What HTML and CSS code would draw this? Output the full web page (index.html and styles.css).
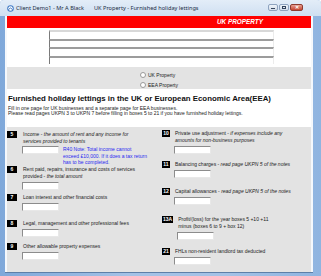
FILE: index.html
```html
<!DOCTYPE html>
<html lang="en">
<head>
    <meta charset="UTF-8">
    <title>UK Property - Furnished holiday lettings</title>
    <link rel="stylesheet" href="styles.css">
</head>
<body>

<div class="window">
    <div class="titlebar">
        <svg class="app-icon" width="7" height="7" viewBox="0 0 14 14">
            <circle cx="7" cy="7" r="6.5" fill="#3d78c4"/>
            <circle cx="7" cy="7" r="4.5" fill="#ffffff"/>
            <path d="M3 9 Q7 3 11 9" fill="none" stroke="#3d78c4" stroke-width="2"/>
        </svg>
        <span class="title">Client Demo1 - Mr A Black</span>
        <span class="title title-page">UK Property - Furnished holiday lettings</span>
        <div class="caption-buttons">
            <span class="cap-btn cap-min"><i></i></span>
            <span class="cap-btn cap-max"><i></i></span>
            <span class="cap-btn cap-close">&#x2715;</span>
        </div>
    </div>

    <div class="client">
        <div class="banner">UK PROPERTY</div>

        <!-- name and address lines -->
        <div class="name-lines">
            <div class="line first"></div>
            <div class="line"></div>
            <div class="line"></div>
            <div class="line"></div>
        </div>

        <div class="choice">
            <div class="choice-list">
                <label><span class="radio"></span>UK Property</label>
                <label><span class="radio"></span>EEA Property</label>
            </div>
        </div>

        <div class="intro">
            <h1>Furnished holiday lettings in the UK or European Economic Area(EEA)</h1>
            <p>Fill in one page for UK businesses and a separate page for EEA businesses.<br>
            Please read pages UKPN 3 to UKPN 7 before filling in boxes 5 to 21 if you have furnished holiday lettings.</p>
        </div>

        <div class="boxes">
            <div class="col col-left">
                <div class="item">
                    <span class="badge">5</span>
                    <div class="item-body">
                        <p class="label">Income - <em>the amount of rent and any income for<br>services provided to tenants</em></p>
                        <div class="field-row">
                            <input class="field" type="text">
                            <p class="note">R40 Note: Total income cannot<br>exceed &pound;10,000. If it does a tax return<br>has to be completed.</p>
                        </div>
                    </div>
                </div>
                <div class="item">
                    <span class="badge">6</span>
                    <div class="item-body">
                        <p class="label">Rent paid, repairs, insurance and costs of services<br>provided - <em>the total amount</em></p>
                        <input class="field" type="text">
                    </div>
                </div>
                <div class="item">
                    <span class="badge">7</span>
                    <div class="item-body">
                        <p class="label">Loan interest and other financial costs</p>
                        <input class="field" type="text">
                    </div>
                </div>
                <div class="item">
                    <span class="badge">8</span>
                    <div class="item-body">
                        <p class="label">Legal, management and other professional fees</p>
                        <input class="field" type="text">
                    </div>
                </div>
                <div class="item">
                    <span class="badge">9</span>
                    <div class="item-body">
                        <p class="label">Other allowable property expenses</p>
                        <input class="field" type="text">
                    </div>
                </div>
            </div>

            <div class="col col-right">
                <div class="item">
                    <span class="badge">10</span>
                    <div class="item-body">
                        <p class="label">Private use adjustment - <em>if expenses include any<br>amounts for non-business purposes</em></p>
                        <input class="field" type="text">
                    </div>
                </div>
                <div class="item">
                    <span class="badge">11</span>
                    <div class="item-body">
                        <p class="label">Balancing charges - <em>read page UKPN 5 of the notes</em></p>
                        <input class="field" type="text">
                    </div>
                </div>
                <div class="item">
                    <span class="badge">12</span>
                    <div class="item-body">
                        <p class="label">Capital allowances - <em>read page UKPN 5 of the notes</em></p>
                        <input class="field" type="text">
                    </div>
                </div>
                <div class="item">
                    <span class="badge">13A</span>
                    <div class="item-body">
                        <p class="label">Profit/(loss) for the year boxes 5 +10 +11<br>minus (boxes 6 to 9 + box 12)</p>
                        <input class="field" type="text">
                    </div>
                </div>
                <div class="item">
                    <span class="badge">21</span>
                    <div class="item-body">
                        <p class="label">FHLs non-resident landlord tax deducted</p>
                        <input class="field" type="text">
                    </div>
                </div>
            </div>
        </div>
    </div>
</div>

</body>
</html>
```

FILE: styles.css
```css
body {
    margin: 0;
    font-family: "Liberation Sans", Arial, sans-serif;
    background-color: #ffffff;
}

.window {
    width: 321px;
    height: 276px;
    box-sizing: border-box;
    padding: 0 8px 3px 5px;
    display: flex;
    flex-direction: column;
    background: linear-gradient(to right, #7fa8da, #a4c2e6 40%, #a4c2e6 70%, #8fb4e0);
    border-radius: 4px 4px 0 0;
}

/* title bar */
.titlebar {
    height: 16px;
    margin: 0 -8px 0 -5px;
    padding-left: 7px;
    display: flex;
    align-items: center;
    background: linear-gradient(#e3edf8, #cfdff1);
    border-radius: 4px 4px 0 0;
    position: relative;
}

.app-icon {
    margin-right: 2px;
}

.title {
    font-family: "Noto Sans", "DejaVu Sans", sans-serif;
    font-size: 5.6px;
    color: #1b2b44;
}

.title-page {
    margin-left: 10px;
}

.caption-buttons {
    position: absolute;
    top: 4px;
    right: 18px;
    display: flex;
    gap: 1px;
}

.cap-btn {
    width: 10px;
    height: 7px;
    border: 1px solid #8ea3bf;
    border-radius: 2px;
    background: linear-gradient(#eef3f9, #d3dde9);
    box-sizing: border-box;
    display: flex;
    justify-content: center;
    align-items: center;
}

.cap-min i {
    width: 4px;
    height: 1px;
    margin-top: 2px;
    background: #33435c;
}

.cap-max i {
    width: 4px;
    height: 3px;
    border: 1px solid #33435c;
    box-sizing: border-box;
}

.cap-close {
    width: 13px;
    background: linear-gradient(#e8a093, #c6442f);
    border-color: #8d3b30;
    color: #ffffff;
    font-size: 5px;
    font-weight: bold;
    line-height: 5px;
}

/* client area */
.client {
    flex: 1;
    display: flex;
    flex-direction: column;
    padding: 0 2px;
    background-color: #f5f8fc;
    border-bottom: 1px solid #5d7fa8;
}

.banner {
    height: 12px;
    background-color: #ff0000;
    color: #ffffff;
    font-size: 6.4px;
    font-weight: bold;
    font-style: italic;
    line-height: 12px;
    text-align: right;
    padding-right: 48px;
}

.name-lines {
    height: 39px;
    box-sizing: border-box;
    padding: 2px 0 0 42px;
    background-color: #ffffff;
}

.line {
    width: 225px;
    height: 8.5px;
    box-sizing: border-box;
    border-top: 2px solid #9c9c9c;
    border-left: 1px solid #7a7a7a;
    border-right: 1px solid #ececec;
}

.line.first {
    border-top-color: #d8d8d8;
}

.choice {
    height: 22px;
    box-sizing: border-box;
    padding-top: 3px;
    background-color: #e3e3e3;
    display: flex;
    justify-content: center;
}

.choice-list label {
    display: flex;
    align-items: center;
    height: 10px;
    font-size: 5px;
    color: #222222;
}

.radio {
    width: 4px;
    height: 4px;
    border: 1px solid #9a9a9a;
    border-radius: 50%;
    background-color: #ffffff;
    margin-right: 2px;
}

.intro {
    height: 38px;
    box-sizing: border-box;
    padding: 4px 0 0 1px;
    background-color: #ffffff;
}

.intro h1 {
    margin: 0 0 2px 0;
    font-size: 7.85px;
    line-height: 11px;
    color: #111111;
}

.intro p {
    margin: 0;
    font-size: 5px;
    line-height: 5px;
    color: #222222;
}

/* numbered boxes */
.boxes {
    flex: 1;
    display: flex;
    background-color: #e3e3e3;
}

.col {
    display: grid;
}

.col-left {
    width: 155px;
    padding-top: 4px;
    grid-template-rows: 35px 28px 26px 23px auto;
}

.col-right {
    padding-top: 3px;
    grid-template-rows: 31px 27px 28px 32px auto;
}

.item {
    display: flex;
    align-items: flex-start;
    gap: 6px;
}

.col-right .item {
    gap: 5px;
}

.badge {
    min-width: 10px;
    height: 7px;
    box-sizing: border-box;
    background-color: #000000;
    color: #ffffff;
    font-size: 5px;
    font-weight: bold;
    line-height: 7px;
    text-align: center;
}

.col-right .badge {
    min-width: 8px;
    padding: 0 1px;
}

.label {
    margin: 0;
    font-size: 5px;
    line-height: 7px;
    color: #222222;
}

.field {
    display: block;
    width: 37px;
    height: 8px;
    box-sizing: border-box;
    margin: 2px 0 0 -1px;
    padding: 0;
    background-color: #ffffff;
    border: 1px solid;
    border-color: #8c8c8c #e8e8e8 #e8e8e8 #8c8c8c;
}

.field-row {
    display: flex;
    gap: 4px;
}

.field-row .field {
    margin-top: 1px;
}

.note {
    margin: 1px 0 0 0;
    font-size: 5px;
    line-height: 6.7px;
    color: #2a2af0;
}
```
